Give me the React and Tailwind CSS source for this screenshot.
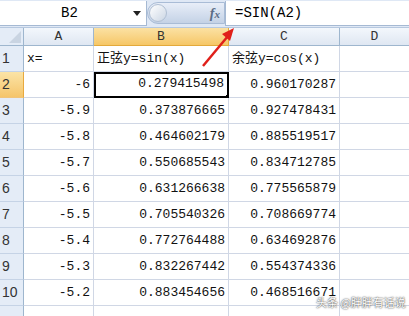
const rows = [
  ["-6", "0.279415498", "0.960170287"],
  ["-5.9", "0.373876665", "0.927478431"],
  ["-5.8", "0.464602179", "0.885519517"],
  ["-5.7", "0.550685543", "0.834712785"],
  ["-5.6", "0.631266638", "0.775565879"],
  ["-5.5", "0.705540326", "0.708669774"],
  ["-5.4", "0.772764488", "0.634692876"],
  ["-5.3", "0.832267442", "0.554374336"],
  ["-5.2", "0.883454656", "0.468516671"],
];

const mono = { fontFamily: '"Liberation Mono", "Noto Sans CJK SC", monospace' };

function RowHead({ n, active }) {
  return (
    <div
      className={`h-[26px] flex items-end pb-[2px] pl-[2px] text-[14px] text-[#333] border-r border-b ${
        active
          ? "bg-gradient-to-b from-[#fbe4a6] to-[#f5c56a] border-r-[#e8a93e] border-b-[#f0c47a]"
          : "bg-[#e4ecf7] border-r-[#9eb6ce] border-b-[#c5d3e6]"
      }`}
      style={{ fontFamily: '"Liberation Sans", sans-serif' }}
    >
      {n}
    </div>
  );
}

function Cell({ children, right, className = "" }) {
  return (
    <div
      className={`h-[26px] flex items-end pb-[3px] px-[3px] text-[13px] text-[#111] border-r border-b border-[#d0d7e5] whitespace-nowrap overflow-hidden ${
        right ? "justify-end" : ""
      } ${className}`}
    >
      {children}
    </div>
  );
}

export default function App() {
  return (
    <div className="relative w-[409px] h-[316px] overflow-hidden bg-white" style={mono}>
      {/* Formula bar */}
      <div className="h-[28px] flex bg-[#dfe8f5] border-b border-[#b6c8df]">
        <div className="w-[147px] h-[25px] mt-[1px] bg-white border-r border-b border-[#a5b9d3] flex items-center">
          <span className="flex-1 text-center text-[14px] pl-[6px]">B2</span>
          <svg width="8" height="5" viewBox="0 0 8 5" className="mr-[5px]">
            <path d="M0 0h8L4 5z" fill="#222" />
          </svg>
        </div>
        <div className="w-[78px] h-[22px] mt-[2px] rounded-l-full bg-gradient-to-b from-[#e8eef8] to-[#c4d2e6] border border-[#a9bcd6] flex items-center">
          <div className="w-[18px] h-[18px] ml-[1px] rounded-full bg-gradient-to-br from-white to-[#cbd6e4] border border-[#b0bfd3]" />
          <span
            className="ml-auto mr-[4px] text-[14px] italic font-bold text-[#5a6b85]"
            style={{ fontFamily: '"Liberation Serif", serif' }}
          >
            f<span className="text-[11px]">x</span>
          </span>
        </div>
        <div className="flex-1 h-[25px] mt-[1px] bg-white border-l border-b border-[#a5b9d3] flex items-center pl-[9px] text-[14px]">
          =SIN(A2)
        </div>
      </div>

      {/* Sheet */}
      <div className="grid grid-cols-[24px_70px_135px_111px_1fr]">
        <div className="h-[18px] bg-[#e4ecf7] border-r border-b border-[#9eb6ce] relative">
          <svg width="12" height="12" viewBox="0 0 12 12" className="absolute right-[2px] bottom-[2px]">
            <path d="M12 0V12H0z" fill="#c9d4e2" />
          </svg>
        </div>
        <div className="h-[18px] bg-gradient-to-b from-[#f3f7fc] to-[#dfe7f2] border-r border-b border-[#9eb6ce] flex items-center justify-center text-[13px] text-[#333]">A</div>
        <div className="h-[18px] bg-gradient-to-b from-[#fbe1a3] to-[#f6c766] border-r border-b border-[#e3a93b] flex items-center justify-center text-[13px] text-[#333]">B</div>
        <div className="h-[18px] bg-gradient-to-b from-[#f3f7fc] to-[#dfe7f2] border-r border-b border-[#9eb6ce] flex items-center justify-center text-[13px] text-[#333]">C</div>
        <div className="h-[18px] bg-gradient-to-b from-[#f3f7fc] to-[#dfe7f2] border-b border-[#9eb6ce] flex items-center justify-center text-[13px] text-[#333]">D</div>

        <RowHead n="1" />
        <Cell>x=</Cell>
        <Cell>正弦y=sin(x)</Cell>
        <Cell>余弦y=cos(x)</Cell>
        <Cell className="border-r-0" />

        {rows.map((r, i) => (
          <div key={i} className="contents">
            <RowHead n={i + 2} active={i === 0} />
            <Cell right>{r[0]}</Cell>
            <Cell right className={i === 0 ? "relative !border-2 !border-black" : ""}>
              {r[1]}
              {i === 0 && (
                <span className="absolute right-[-4px] bottom-[-4px] w-[6px] h-[6px] bg-black border border-white" />
              )}
            </Cell>
            <Cell right>{r[2]}</Cell>
            <Cell className="border-r-0" />
          </div>
        ))}

        <RowHead n="" />
        <Cell />
        <Cell />
        <Cell />
        <Cell className="border-r-0" />
      </div>

      {/* Red arrow */}
      <svg className="absolute left-0 top-0 pointer-events-none" width="409" height="316">
        <line x1="203" y1="66" x2="228" y2="36" stroke="#e0201a" strokeWidth="2.5" />
        <path d="M234 28 L222 34 L230 41 Z" fill="#e0201a" />
      </svg>

      {/* Watermark */}
      <div
        className="absolute left-[316px] top-[295px] text-[11px] leading-[14px] text-white whitespace-nowrap"
        style={{
          fontFamily: '"Noto Sans CJK SC", sans-serif',
          textShadow: "0 0 2px #555, 0 0 1px #555",
        }}
      >
        头条 @胖胖有话说
      </div>
    </div>
  );
}
